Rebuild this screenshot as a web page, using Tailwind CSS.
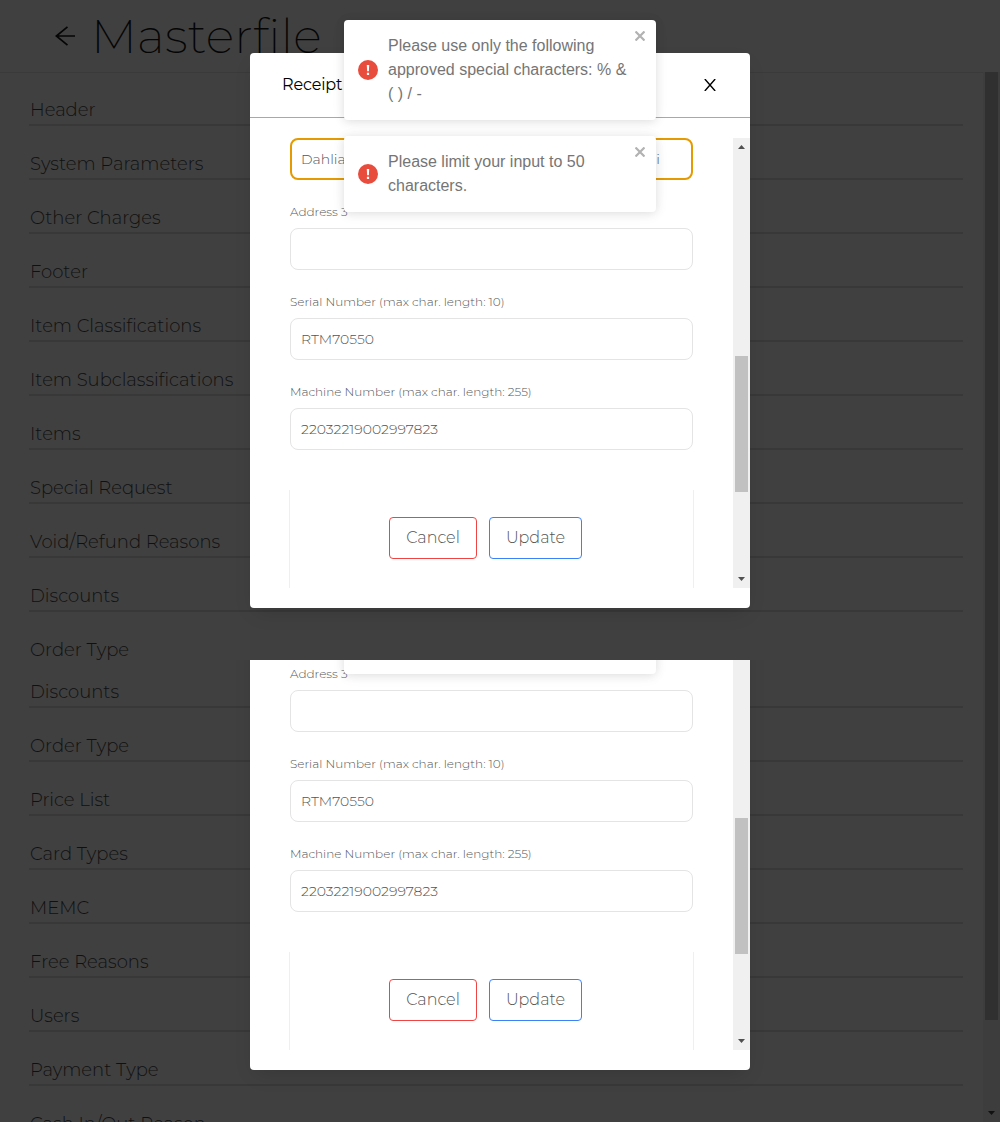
<!DOCTYPE html>
<html lang="en">
<head>
<meta charset="utf-8">
<title>Masterfile</title>
<script src="https://cdn.jsdelivr.net/npm/@tailwindcss/browser@4"></script>
</head>
<body class="relative h-[1122px] w-[1000px] overflow-hidden bg-[#404040] font-['Montserrat','Inter',sans-serif]">

<header class="flex h-[73px] items-center border-b border-[#3a3a3a] pl-[55px]">
  <svg class="h-5 w-5 shrink-0" viewBox="0 0 20 20" fill="none" stroke="#050505" stroke-width="1.7"><path d="M20 10H1.5M12.5 .8L1.3 10l11.2 9.2"/></svg>
  <h1 class="ml-4 text-[48px] font-extralight leading-none tracking-[0.15px] text-[#050505]">Masterfile</h1>
</header>

<main class="-mt-px flex h-[1050px] justify-between">
  <div class="w-[934px] ml-[29px]">
    <ul id="menu-top" class="h-[588px] overflow-hidden"></ul>
    <ul id="menu-bottom" class="h-[462px] overflow-hidden"></ul>
  </div>
  <div class="flex w-[17px] flex-col items-center bg-[#3d3d3d]">
    <div class="h-[948px] w-[13px] bg-[#303030]"></div>
    <svg class="mt-[91px] h-1 w-[7px]" viewBox="0 0 7 4"><path d="M0 0h7L3.5 4z" fill="#111"/></svg>
  </div>
</main>

<template id="row">
  <li class="flex h-[54px] items-end border-b-2 border-[#383838] pb-px pl-px text-[18px] font-light leading-[26px] text-[#101010]"><span class="whitespace-nowrap"></span></li>
</template>

<section id="view-top" class="absolute left-0 top-0 h-[660px] w-full overflow-hidden"></section>
<section id="view-bottom" class="absolute left-0 top-[660px] flex h-[462px] w-full flex-col justify-end overflow-hidden"></section>

<template id="dialog">
  <div class="relative h-[660px] w-full shrink-0 pl-[250px] pt-[53px]">
    <div class="flex h-[555px] w-[500px] flex-col rounded bg-white pb-5 shadow-[0_8px_20px_-6px_rgba(0,0,0,0.16)]">
      <div class="flex h-[65px] shrink-0 items-center justify-between border-b border-[#a8a8a8] pl-8 pr-[33px] text-[16px] text-black">
        <span class="tracking-[-0.15px]">Receipt</span>
        <svg class="h-3 w-3.5" viewBox="0 0 14 12" fill="none" stroke="#000" stroke-width="1.4"><path d="M1.8 0l10.4 12M12.2 0L1.8 12"/></svg>
      </div>
      <div class="mt-5 flex h-[450px] justify-between">
        <div class="ml-[39px] w-[405px] text-[#555]">
          <div class="mx-px flex h-[42px] items-center justify-between rounded-lg border-2 border-[#e49a00] pl-[9px] pr-[31px] text-[14px] font-light"><span>Dahlia</span><span>i</span></div>
          <label class="mx-px mt-6 block h-6 text-[12px] font-light leading-4">Address 3</label>
          <div class="mx-px h-[42px] rounded-lg border border-[#e4e4e4]"></div>
          <label class="mx-px mt-6 block h-6 text-[12px] font-light leading-4">Serial Number (max char. length: 10)</label>
          <div class="mx-px flex h-[42px] items-center rounded-lg border border-[#e4e4e4] pl-2.5 text-[14px] font-light">RTM70550</div>
          <label class="mx-px mt-6 block h-6 text-[12px] font-light leading-4">Machine Number (max char. length: 255)</label>
          <div class="mx-px flex h-[42px] items-center rounded-lg border border-[#e4e4e4] pl-2.5 text-[14px] font-light">22032219002997823</div>
          <div class="mt-10 flex h-[98px] gap-3 border-x border-[#efefef] pl-[99px] pt-[27px] text-[16px] font-light">
            <div class="flex h-[42px] w-[88px] items-center justify-center rounded border border-[#ef4444]">Cancel</div>
            <div class="flex h-[42px] w-[93px] items-center justify-center rounded border border-[#3b82f6]">Update</div>
          </div>
        </div>
        <div class="flex w-[17px] flex-col items-center bg-[#f0f0f0]">
          <svg class="mt-[7px] h-1 w-[7px] shrink-0" viewBox="0 0 7 4"><path d="M0 4h7L3.5 0z" fill="#505050"/></svg>
          <div class="mt-[207px] h-[136px] w-[13px] shrink-0 bg-[#c1c1c1]"></div>
          <svg class="mt-[85px] h-1 w-[7px] shrink-0" viewBox="0 0 7 4"><path d="M0 0h7L3.5 4z" fill="#505050"/></svg>
        </div>
      </div>
    </div>
    <div class="absolute left-[344px] top-5 flex w-[312px] flex-col gap-4 font-['Liberation_Sans',Arial,sans-serif] text-[16px] leading-6 text-[#757575]">
      <div class="relative flex h-[100px] items-center rounded bg-white pl-3.5 shadow-[0_1px_10px_rgba(0,0,0,0.1),0_2px_15px_rgba(0,0,0,0.05)]">
        <svg class="h-5 w-5 shrink-0" viewBox="0 0 20 20"><circle cx="10" cy="10" r="10" fill="#e74c3c"/><path d="M8.8 5h2.4l-.3 6.2H9.1zM8.9 12.8h2.2v2.2H8.9z" fill="#fff"/></svg>
        <p class="ml-2.5 whitespace-nowrap">Please use only the following<br>approved special characters: % &amp;<br>( ) / -</p>
        <svg class="absolute right-[11px] top-[11px] h-2.5 w-2.5" viewBox="0 0 10 10" stroke="#b2b2b2" stroke-width="2.2"><path d="M.5 .5l9 9M9.5 .5l-9 9"/></svg>
      </div>
      <div class="relative flex h-[76px] items-center rounded bg-white pl-3.5 shadow-[0_1px_10px_rgba(0,0,0,0.1),0_2px_15px_rgba(0,0,0,0.05)]">
        <svg class="h-5 w-5 shrink-0" viewBox="0 0 20 20"><circle cx="10" cy="10" r="10" fill="#e74c3c"/><path d="M8.8 5h2.4l-.3 6.2H9.1zM8.9 12.8h2.2v2.2H8.9z" fill="#fff"/></svg>
        <p class="ml-2.5 whitespace-nowrap">Please limit your input to 50<br>characters.</p>
        <svg class="absolute right-[11px] top-[11px] h-2.5 w-2.5" viewBox="0 0 10 10" stroke="#b2b2b2" stroke-width="2.2"><path d="M.5 .5l9 9M9.5 .5l-9 9"/></svg>
      </div>
    </div>
  </div>
</template>

<script>
  const menus = {
    'menu-top': ['Header', 'System Parameters', 'Other Charges', 'Footer', 'Item Classifications', 'Item Subclassifications', 'Items', 'Special Request', 'Void/Refund Reasons', 'Discounts', 'Order Type'],
    'menu-bottom': ['Discounts', 'Order Type', 'Price List', 'Card Types', 'MEMC', 'Free Reasons', 'Users', 'Payment Type', 'Cash In/Out Reason']
  };
  for (const [id, names] of Object.entries(menus)) {
    names.forEach((name, i) => {
      const row = document.getElementById('row').content.cloneNode(true);
      row.querySelector('span').textContent = name;
      if (id === 'menu-bottom' && i === 0) row.querySelector('li').classList.add('-mt-1.5');
      document.getElementById(id).append(row);
    });
  }
  for (const id of ['view-top', 'view-bottom'])
    document.getElementById(id).append(document.getElementById('dialog').content.cloneNode(true));
</script>
</body>
</html>
